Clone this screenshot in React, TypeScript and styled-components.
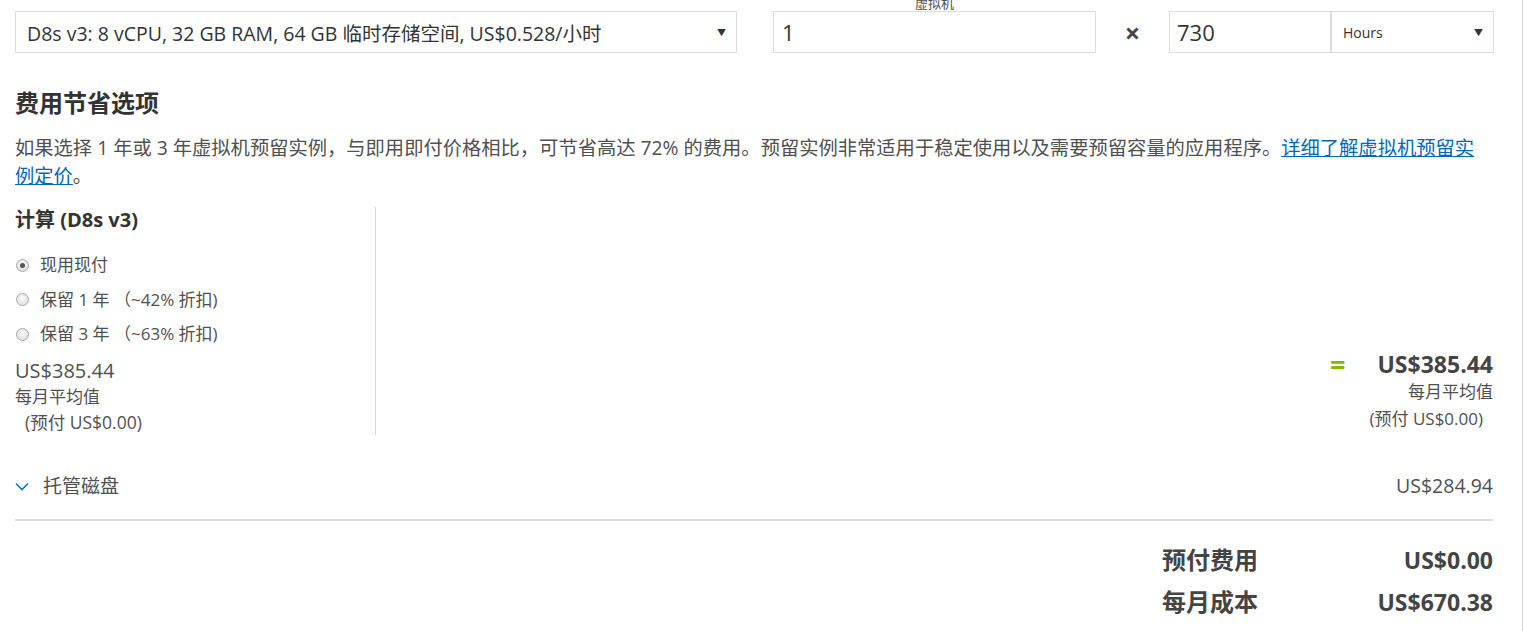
import React from "react";
import styled, { createGlobalStyle } from "styled-components";

const Global = createGlobalStyle`
  html, body { margin: 0; padding: 0; background: #fff; overflow: hidden; }
  body {
    font-family: "Segoe UI", "Open Sans", "Noto Sans CJK SC", sans-serif;
    color: #505050;
  }
`;

const Page = styled.div`
  width: 1523px;
  height: 631px;
  box-sizing: border-box;
  border-right: 1px solid #d4d4d4;
  padding: 0 29px 0 15px;
  overflow: hidden;
`;

const TopRow = styled.div`
  display: grid;
  grid-template-columns: 722px 36px 323px 73px 162px 163px;
  grid-template-rows: 16px 42px;
  margin-top: -5px;
`;

const FieldLabel = styled.div<{ $col: number }>`
  grid-column: ${(p) => p.$col};
  grid-row: 1;
  font-size: 13px;
  line-height: 16px;
  text-align: center;
  color: #505050;
`;

const Box = styled.div<{ $col: number; $size?: number; $padLeft?: number }>`
  grid-column: ${(p) => p.$col};
  grid-row: 2;
  border: 1px solid #dcdcdc;
  display: flex;
  align-items: center;
  justify-content: space-between;
  padding: 0 10px 0 ${(p) => p.$padLeft ?? 11}px;
  font-size: ${(p) => p.$size ?? 19.5}px;
  color: #333;
  box-sizing: border-box;
`;

const Caret = styled.span`
  font-size: 9px;
  color: #333;
`;

const Times = styled.div`
  grid-column: 4;
  grid-row: 2;
  display: flex;
  align-items: center;
  justify-content: center;
  font-size: 27px;
  font-weight: 700;
  color: #444;
`;

const Heading = styled.h2`
  margin: 34px 0 0;
  font-size: 24px;
  line-height: 32px;
  font-weight: 700;
  color: #333;
`;

const Para = styled.p`
  margin: 15px 0 0;
  font-size: 19.3px;
  line-height: 28px;
  color: #505050;
`;

const Link = styled.a`
  color: #0067b8;
  text-decoration: underline;
`;

const ComputeSection = styled.div`
  display: flex;
  margin-top: 17px;
`;

const LeftCol = styled.div`
  width: 360px;
  border-right: 1px solid #d4d4d4;
`;

const SubHead = styled.div`
  font-size: 20px;
  font-weight: 700;
  color: #333;
  line-height: 26px;
`;

const RadioList = styled.div`
  margin-top: 19px;
  display: flex;
  flex-direction: column;
  gap: 8.5px;
`;

const RadioRow = styled.label`
  display: flex;
  align-items: center;
  font-size: 17px;
  line-height: 26px;
  color: #505050;
  white-space: pre;
`;

const RadioDot = styled.span<{ $checked?: boolean }>`
  width: 11px;
  height: 11px;
  border-radius: 50%;
  border: 1px solid #a8a8a8;
  background: radial-gradient(circle at 50% 40%, #fafafa, #d8d8d8);
  margin: 0 11px 0 1px;
  display: flex;
  align-items: center;
  justify-content: center;
  &::after {
    content: "";
    width: 5px;
    height: 5px;
    border-radius: 50%;
    background: ${(p) => (p.$checked ? "#555" : "transparent")};
  }
`;

const Price = styled.div`
  margin-top: 11px;
  font-size: 20px;
  line-height: 26px;
  color: #505050;
`;

const Small = styled.div<{ $indent?: boolean; $lh?: number; $size?: number }>`
  font-size: ${(p) => p.$size ?? 17}px;
  line-height: ${(p) => p.$lh ?? 26}px;
  color: #505050;
  padding-left: ${(p) => (p.$indent ? "10px" : "0")};
`;

const RightCol = styled.div`
  flex: 1;
  display: flex;
  flex-direction: column;
  justify-content: flex-end;
  align-items: flex-end;
  padding-bottom: 3px;
`;

const TotalLine = styled.div`
  display: flex;
  align-items: center;
  gap: 32px;
`;

const Equals = styled.span`
  color: #7fba00;
  font-size: 27px;
  font-weight: 700;
  line-height: 27px;
`;

const BigPrice = styled.span`
  font-size: 23px;
  font-weight: 700;
  color: #444;
  line-height: 27px;
`;

const RightSmall = styled.div<{ $pad?: number }>`
  font-size: 17px;
  line-height: 27px;
  color: #505050;
  padding-right: ${(p) => p.$pad ?? 0}px;
`;

const DiskRow = styled.div`
  display: flex;
  align-items: center;
  justify-content: space-between;
  margin-top: 38px;
  padding-bottom: 20px;
  border-bottom: 2px solid #dcdcdc;
`;

const DiskLabel = styled.div`
  display: flex;
  align-items: center;
  gap: 14px;
  font-size: 19px;
  color: #505050;
  line-height: 26px;
`;

const DiskPrice = styled.div`
  font-size: 19.5px;
  line-height: 26px;
  color: #505050;
`;

const Summary = styled.div`
  display: grid;
  grid-template-columns: auto 235px;
  justify-content: end;
  row-gap: 10px;
  margin-top: 23px;
`;

const SumLabel = styled.div`
  font-size: 24px;
  font-weight: 700;
  color: #444;
  line-height: 32px;
`;

const SumValue = styled.div`
  font-size: 23px;
  font-weight: 700;
  color: #444;
  line-height: 32px;
  text-align: right;
`;

const Chevron = () => (
  <svg width="14" height="9" viewBox="0 0 14 9">
    <path d="M1 1.5 L7 7.5 L13 1.5" fill="none" stroke="#0078d4" strokeWidth="1.6" />
  </svg>
);

export default function App() {
  return (
    <>
      <Global />
      <Page>
        <TopRow>
          <FieldLabel $col={3}>虚拟机</FieldLabel>
          <Box $col={1}>
            <span>D8s v3: 8 vCPU, 32 GB RAM, 64 GB 临时存储空间, US$0.528/小时</span>
            <Caret>▼</Caret>
          </Box>
          <Box $col={3} $size={22} $padLeft={8}>
            <span>1</span>
          </Box>
          <Times>×</Times>
          <Box $col={5} $size={22} $padLeft={7}>
            <span>730</span>
          </Box>
          <Box $col={6} $size={14}>
            <span>Hours</span>
            <Caret>▼</Caret>
          </Box>
        </TopRow>

        <Heading>费用节省选项</Heading>
        <Para>
          如果选择 1 年或 3 年虚拟机预留实例，与即用即付价格相比，可节省高达 72% 的费用。预留实例非常适用于稳定使用以及需要预留容量的应用程序。
          <Link href="#">详细了解虚拟机预留实例定价</Link>。
        </Para>

        <ComputeSection>
          <LeftCol>
            <SubHead>计算 (D8s v3)</SubHead>
            <RadioList>
              <RadioRow>
                <RadioDot $checked />
                现用现付
              </RadioRow>
              <RadioRow>
                <RadioDot />
                {"保留 1 年 （~42% 折扣)"}
              </RadioRow>
              <RadioRow>
                <RadioDot />
                {"保留 3 年 （~63% 折扣)"}
              </RadioRow>
            </RadioList>
            <Price>US$385.44</Price>
            <Small>每月平均值</Small>
            <Small $indent $lh={25} $size={17.5}>(预付 US$0.00)</Small>
          </LeftCol>
          <RightCol>
            <TotalLine>
              <Equals>=</Equals>
              <BigPrice>US$385.44</BigPrice>
            </TotalLine>
            <RightSmall>每月平均值</RightSmall>
            <RightSmall $pad={10}>(预付 US$0.00)</RightSmall>
          </RightCol>
        </ComputeSection>

        <DiskRow>
          <DiskLabel>
            <Chevron />
            托管磁盘
          </DiskLabel>
          <DiskPrice>US$284.94</DiskPrice>
        </DiskRow>

        <Summary>
          <SumLabel>预付费用</SumLabel>
          <SumValue>US$0.00</SumValue>
          <SumLabel>每月成本</SumLabel>
          <SumValue>US$670.38</SumValue>
        </Summary>
      </Page>
    </>
  );
}
